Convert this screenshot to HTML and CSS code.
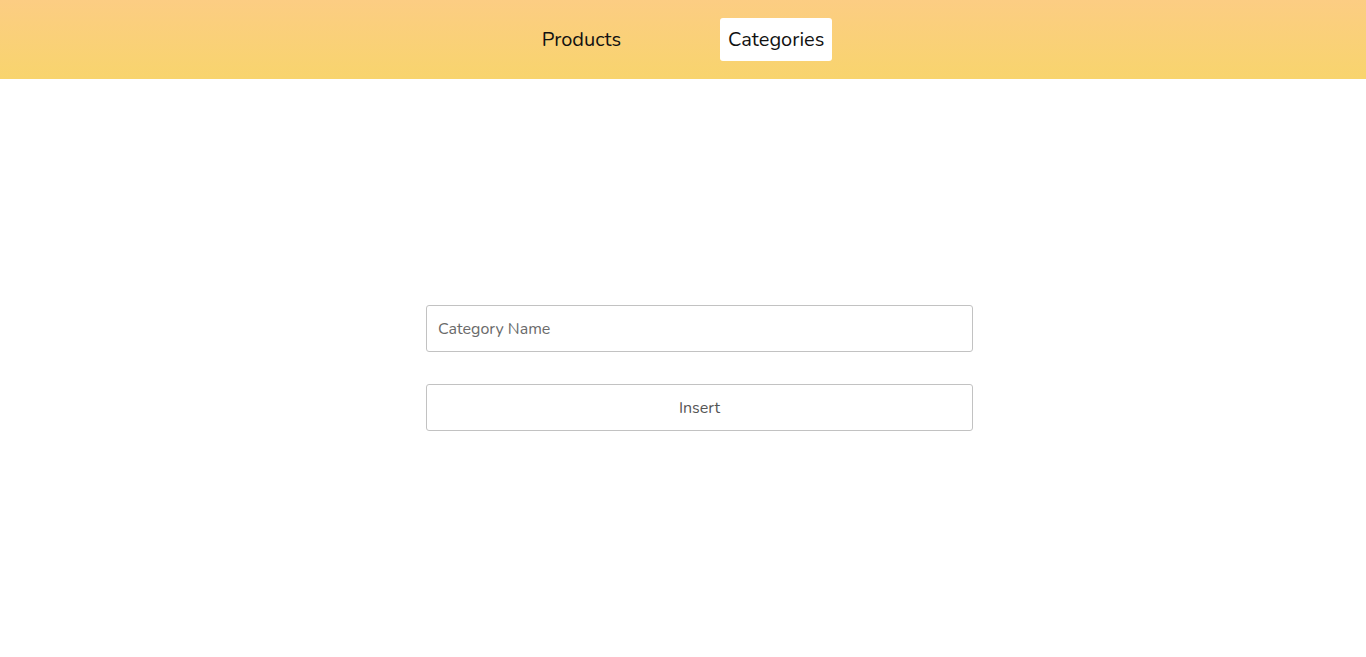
FILE: index.html
```html
<!DOCTYPE html>
<html>
<head>
<meta charset="utf-8">
<link rel="stylesheet" href="styles.css">
</head>
<body>
<header class="topbar">
  <nav class="nav">
    <a class="nav-link">Products</a>
    <a class="nav-link active">Categories</a>
  </nav>
</header>
<main class="main">
  <form class="form">
    <input class="field" type="text" placeholder="Category Name">
    <button class="btn" type="button">Insert</button>
  </form>
</main>
</body>
</html>
```
FILE: styles.css
```css
* { box-sizing: border-box; }
html, body { margin: 0; padding: 0; background: #fff; }
body { font-family: "Nunito", "Lato", "Noto Sans", sans-serif; }
.topbar {
  height: 79px;
  background: linear-gradient(to bottom, #fccd83, #f8d46d);
  display: flex;
  justify-content: center;
  align-items: flex-start;
  padding-top: 18px;
}
.nav {
  display: flex;
  gap: 91px;
}
.nav-link {
  display: block;
  height: 43px;
  line-height: 43px;
  padding: 0 8px;
  font-size: 20px;
  color: #111;
  border-radius: 3px;
  cursor: pointer;
}
.nav-link.active { background: #fff; }
.main {
  padding-top: 226px;
  padding-left: 426px;
}
.form {
  width: 547px;
  display: flex;
  flex-direction: column;
  gap: 32px;
}
.field, .btn {
  height: 47px;
  width: 100%;
  border: 1px solid #c2c2c2;
  border-radius: 3px;
  background: #fff;
  font-family: inherit;
  font-size: 16px;
  color: #555;
  margin: 0;
}
.field { padding: 0 11px; outline: none; }
.field::placeholder { color: #6a6a6a; }
.btn { text-align: center; }
```
